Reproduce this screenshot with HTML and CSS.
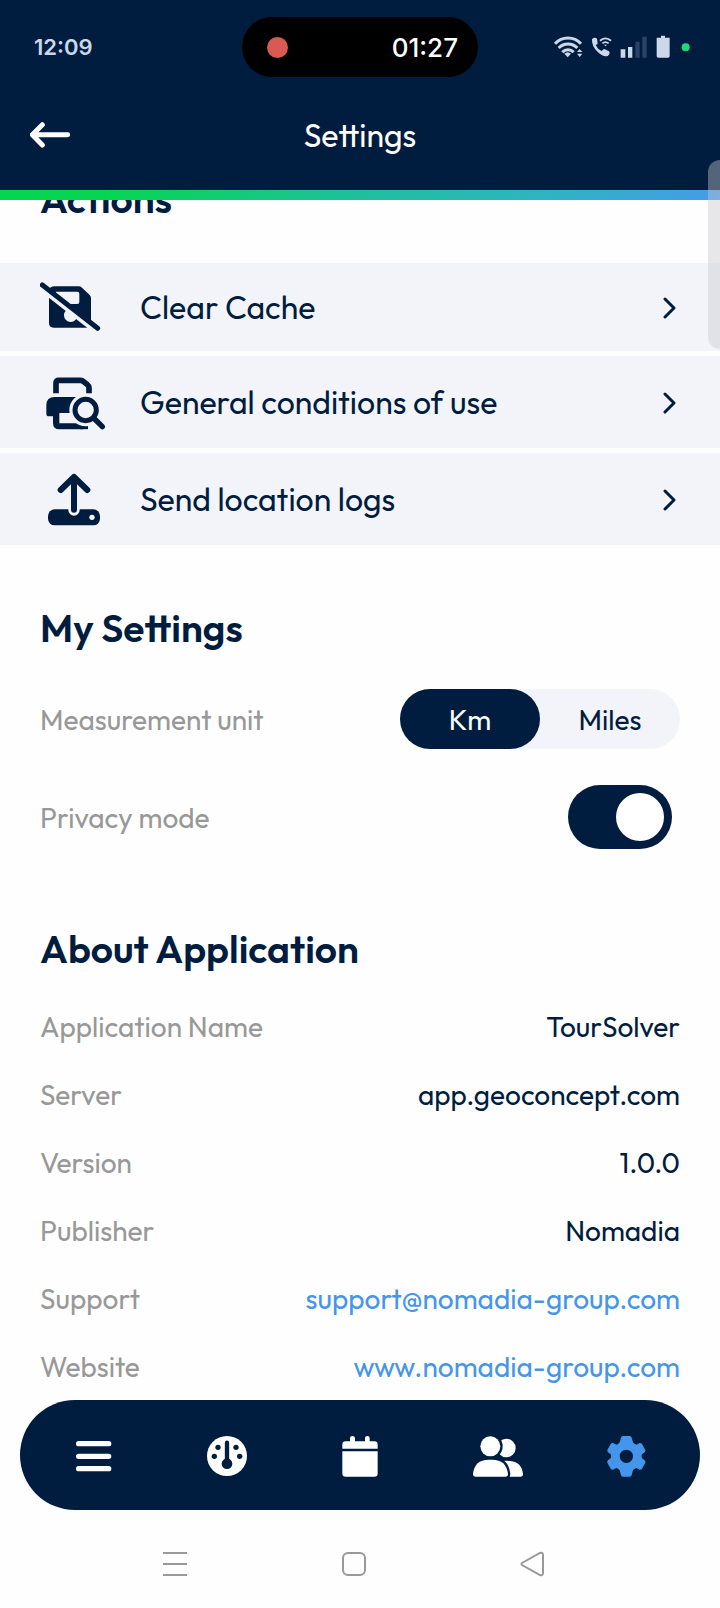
FILE: index.html
```html
<!DOCTYPE html>
<html lang="en">
<head>
<meta charset="utf-8">
<meta name="viewport" content="width=device-width, initial-scale=1">
<title>Settings</title>
<link rel="stylesheet" href="styles.css">
</head>
<body>
<div class="screen">
  <header class="top">
    <div class="status">
      <time class="clock">12:09</time>
      <div class="island"><span class="rec"></span><span>01:27</span></div>
      <svg class="status-icons" width="138" height="24" viewBox="580 104 414 72" aria-hidden="true">
        <g fill="none" stroke="#ccd8ea" stroke-width="9">
          <path d="M586 130C607 107 643 107 664 130"/>
          <path d="M597 143C612 127 638 127 653 143"/>
          <path d="M608 156C617 146 633 146 642 156"/>
          <path d="M721 121C731 112 744 112 754 121" stroke-width="6"/>
          <path d="M728 129C734 124 741 124 747 129" stroke-width="5"/>
        </g>
        <g fill="#ccd8ea">
          <path d="M614 160Q624 151 634 160L624 171Z"/>
          <path d="M652 155L660 146L668 155ZM652 160H668L660 170Z"/>
          <path d="M733 133H742L738 138Z"/>
          <path d="M697 116Q706 109 712 115L714 129Q714 132 708 134Q713 146 726 152Q731 146 734 146L748 153Q753 160 745 166Q733 172 715 156Q695 137 697 116Z"/>
          <path d="M783 147h14v25h-14zM805 140h13v32h-13z"/>
          <path d="M904 106h12v6h14v55q0 5-5 5h-29q-5 0-5-5v-55h13z"/>
        </g>
        <path d="M827 124h13v48h-13zM848 109h13v63h-13z" fill="#2a4263"/>
        <circle cx="978" cy="141" r="12" fill="#1fd877"/>
      </svg>
    </div>
    <div class="titlebar">
      <button class="back" aria-label="Back">
        <svg width="40" height="26" viewBox="90 370 120 78" aria-hidden="true"><path d="M127 378L97 408L127 439M98 408H203" fill="none" stroke="#fff" stroke-width="15" stroke-linecap="round" stroke-linejoin="round"/></svg>
      </button>
      <h1>Settings</h1>
    </div>
  </header>

  <main>
    <section class="actions">
      <h2>Actions</h2>
      <button class="action action-first">
        <svg width="66" height="64" viewBox="120 286 198 192" aria-hidden="true">
          <path fill="#001d40" fill-rule="evenodd" d="M165 320H236Q242 320 246 324L269 346Q273 350 273 356V430Q273 444 259 444H161Q147 444 147 430V335Q147 320 165 320ZM167 336V365L179 373H232Q238 373 238 367V342Q238 336 232 336Z"/>
          <circle cx="212" cy="407" r="20" fill="#f3f4fa"/>
          <path d="M120 326L294 462" stroke="#f3f4fa" stroke-width="12"/>
          <path d="M127 316L293 446" stroke="#001d40" stroke-width="15" stroke-linecap="round"/>
        </svg>
        <span>Clear Cache</span>
        <svg class="chev" width="14" height="24" viewBox="0 0 14 24" aria-hidden="true"><path d="M2 4L11 13L2 22"/></svg>
      </button>
      <button class="action">
        <svg width="66" height="64" viewBox="120 569 198 192" aria-hidden="true">
          <path d="M168 639V609Q168 600 177 600H242Q247 600 251 604L262 613Q267 617 267 622V639" fill="none" stroke="#001d40" stroke-width="17"/>
          <path fill="#001d40" fill-rule="evenodd" d="M164 650H250V747H178Q159 747 159 728V708H147Q139 708 139 700V675Q139 650 164 650ZM178 698V729H236V698Z"/>
          <path d="M240 738H264" stroke="#001d40" stroke-width="17"/>
          <circle cx="257" cy="689" r="49" fill="#f3f4fa"/>
          <circle cx="257" cy="689" r="32" fill="none" stroke="#001d40" stroke-width="15"/>
          <path d="M281 713L307 739" stroke="#001d40" stroke-width="16" stroke-linecap="round"/>
        </svg>
        <span>General conditions of use</span>
        <svg class="chev" width="14" height="24" viewBox="0 0 14 24" aria-hidden="true"><path d="M2 4L11 13L2 22"/></svg>
      </button>
      <button class="action">
        <svg width="66" height="64" viewBox="120 862 198 192" aria-hidden="true">
          <rect x="144" y="989" width="156" height="48" rx="20" fill="#001d40"/>
          <path d="M222 895V991" stroke="#f3f4fa" stroke-width="34" stroke-linecap="round"/>
          <path d="M182 931L222 892L262 931M222 896V990" fill="none" stroke="#001d40" stroke-width="18" stroke-linecap="round" stroke-linejoin="round"/>
          <circle cx="276" cy="1013" r="8" fill="#f3f4fa"/>
        </svg>
        <span>Send location logs</span>
        <svg class="chev" width="14" height="24" viewBox="0 0 14 24" aria-hidden="true"><path d="M2 4L11 13L2 22"/></svg>
      </button>
    </section>

    <section class="group">
      <h2>My Settings</h2>
      <div class="settings">
        <fieldset class="setting">
          <legend>Measurement unit</legend>
          <div class="segment">
            <label><input type="radio" name="unit" checked><span>Km</span></label>
            <label><input type="radio" name="unit"><span>Miles</span></label>
          </div>
        </fieldset>
        <div class="setting">
          <label for="privacy">Privacy mode</label>
          <input class="switch" type="checkbox" role="switch" id="privacy" checked>
        </div>
      </div>
    </section>

    <section class="group">
      <h2>About Application</h2>
      <dl>
        <div><dt>Application Name</dt><dd>TourSolver</dd></div>
        <div><dt>Server</dt><dd>app.geoconcept.com</dd></div>
        <div><dt>Version</dt><dd>1.0.0</dd></div>
        <div><dt>Publisher</dt><dd>Nomadia</dd></div>
        <div><dt>Support</dt><dd><a href="mailto:support@nomadia-group.com">support@nomadia-group.com</a></dd></div>
        <div><dt>Website</dt><dd><a href="http://www.nomadia-group.com">www.nomadia-group.com</a></dd></div>
      </dl>
    </section>
  </main>

  <nav class="tabs">
    <button aria-label="Menu"><svg width="60" height="54" viewBox="191 144 180 162"><path d="M235 191H325M235 229H325M235 266H325" stroke="#fff" stroke-width="16" stroke-linecap="round"/></svg></button>
    <button aria-label="Dashboard"><svg width="60" height="54" viewBox="590 144 180 162"><circle cx="680" cy="228" r="60" fill="#fff"/><g fill="#001d40"><circle cx="653" cy="202" r="8"/><circle cx="707" cy="202" r="8"/><circle cx="642" cy="229" r="8"/><circle cx="718" cy="229" r="8"/><circle cx="680" cy="251" r="16"/></g><path d="M680 188V245" stroke="#001d40" stroke-width="13" stroke-linecap="round"/></svg></button>
    <button aria-label="Calendar"><svg width="60" height="54" viewBox="990 144 180 162"><path fill="#fff" d="M1027 206V194Q1027 184 1037 184H1050V174Q1050 168 1057 168T1065 174V184H1095V174Q1095 168 1102 168T1109 174V184H1123Q1133 184 1133 194V206ZM1027 214H1133V281Q1133 290 1123 290H1037Q1027 290 1027 281Z"/></svg></button>
    <button aria-label="Contacts"><svg width="60" height="54" viewBox="310 144 180 162"><g fill="#fff"><circle cx="440" cy="204" r="28"/><path d="M400 290V248Q430 240 452 243Q486 246 490 282Q490 290 482 290Z"/></g><g fill="#fff" stroke="#001d40" stroke-width="14" paint-order="stroke"><circle cx="392" cy="199" r="30"/><path d="M348 290Q340 290 340 282Q345 239 386 239H398Q440 239 445 282Q445 290 437 290Z"/></g></svg></button>
    <button aria-label="Settings"><svg width="60" height="54" viewBox="709 144 180 162"><path fill="#4596ea" fill-rule="evenodd" d="M790 168H810Q815 168 816 173L820 187Q823 192 830 194L840 189Q844 188 847 192L857 210Q858 214 855 217L847 223Q844 229 847 235L855 241Q858 244 857 248L847 266Q844 270 840 269L830 264Q823 266 820 271L816 285Q815 290 810 290H790Q785 290 784 285L780 271Q777 266 770 264L760 269Q756 270 753 266L743 248Q742 244 745 241L753 235Q756 229 753 223L745 217Q742 214 743 210L753 192Q756 188 760 189L770 194Q777 192 780 187L784 173Q785 168 790 168ZM800 209A20 20 0 1 0 800 249A20 20 0 1 0 800 209Z"/></svg></button>
  </nav>

  <div class="system">
    <button aria-label="Recent apps"><svg width="26" height="26" viewBox="0 0 26 26"><path d="M1 2H25M1 13H25M1 24H25"/></svg></button>
    <button aria-label="Home"><svg width="26" height="26" viewBox="0 0 26 26"><rect x="2" y="2" width="22" height="22" rx="5"/></svg></button>
    <button aria-label="Go back"><svg width="26" height="26" viewBox="0 0 26 26"><path d="M2 12L20 2Q23 1 23 4V22Q23 25 20 24L2 14Q1 13 2 12Z"/></svg></button>
  </div>
  <div class="edge-handle"></div>
</div>
</body>
</html>
```
FILE: styles.css
```css
* { box-sizing: border-box; }
body {
  margin: 0;
  background: #fefefe;
  color: #001d40;
  font-family: Outfit, Lato, "Open Sans", sans-serif;
  font-size: 28px;
}
h1, h2, dl, dd { margin: 0; }
button {
  padding: 0;
  border: 0;
  background: none;
  color: inherit;
  font: inherit;
}
svg { display: block; }

.screen {
  position: relative;
  display: flex;
  flex-direction: column;
  min-height: 100vh;
}

.top {
  position: relative;
  z-index: 1;
  background: #001d40;
  color: #fff;
}
.top::after {
  content: "";
  display: block;
  height: 10px;
  background: linear-gradient(90deg, #07d552 15%, #20bf9c 50%, #2eb4c0 75%, #479bea);
}
.status {
  display: grid;
  grid-template-columns: 1fr 236px 1fr;
  align-items: center;
  padding: 17px 29px 0;
}
.clock {
  padding-left: 5px;
  color: #ccd8ea;
  font-family: Inter, sans-serif;
  font-size: 22px;
  font-weight: 600;
}
.island {
  display: flex;
  align-items: center;
  justify-content: space-between;
  height: 60px;
  padding: 0 20px 0 25px;
  border-radius: 30px;
  background: #000;
  font-family: Inter, sans-serif;
  font-size: 26px;
  font-weight: 500;
}
.rec {
  width: 21px;
  height: 21px;
  border-radius: 50%;
  background: #d95a50;
}
.status-icons { justify-self: end; }
.titlebar {
  display: grid;
  grid-template-columns: 1fr auto 1fr;
  align-items: center;
  height: 113px;
  padding: 3px 30px 0;
}
h1 {
  font-size: 32px;
  font-weight: 400;
  line-height: 40px;
}

main {
  flex: 1;
  margin-top: -25px;
}
h2 {
  font-size: 39px;
  font-weight: 600;
  line-height: 48px;
}
.actions {
  display: flex;
  flex-direction: column;
  gap: 5px;
}
.actions h2 { padding: 0 40px 35px; }
.action {
  display: flex;
  align-items: center;
  gap: 34px;
  padding: 14px 43px 14px 40px;
  background: #f3f4fa;
  font-size: 32px;
  text-align: left;
}
.action-first { padding-block: 12px; }
.action span { flex: 1; }
.chev {
  fill: none;
  stroke: #001d40;
  stroke-width: 3;
  stroke-linecap: round;
  stroke-linejoin: round;
}

.group { padding: 59px 40px 0; }
.settings { padding-top: 18px; }
.setting {
  display: flex;
  align-items: center;
  justify-content: space-between;
  height: 98px;
  margin: 0;
  padding: 0;
  border: 0;
}
.setting legend {
  float: left;
  padding: 0;
}
.setting legend, .setting > label, dt { color: #989898; }
.segment {
  display: grid;
  grid-template-columns: 1fr 1fr;
  width: 280px;
  border-radius: 30px;
  background: #f3f4fa;
}
.segment label { position: relative; }
.segment input {
  position: absolute;
  inset: 0;
  margin: 0;
  opacity: 0;
}
.segment span {
  display: block;
  padding-top: 2px;
  border-radius: 30px;
  line-height: 58px;
  text-align: center;
}
.segment input:checked + span {
  background: #001d40;
  color: #fff;
}
.switch {
  display: flex;
  justify-content: flex-end;
  width: 104px;
  height: 64px;
  margin: 0 8px 0 0;
  padding: 8px;
  border-radius: 32px;
  background: #001d40;
  appearance: none;
}
.switch::before {
  content: "";
  width: 48px;
  height: 48px;
  border-radius: 50%;
  background: #fff;
}
.switch:not(:checked) { justify-content: flex-start; }

dl {
  display: grid;
  gap: 32px;
  padding-top: 36px;
  line-height: 36px;
}
dl div {
  display: flex;
  justify-content: space-between;
}
a {
  color: #4596ea;
  text-decoration: none;
}

.tabs {
  display: grid;
  grid-template-columns: repeat(5, 1fr);
  justify-items: center;
  margin: 0 20px;
  padding: 28px 7px;
  border-radius: 55px;
  background: #001d40;
}
.system {
  display: grid;
  grid-template-columns: repeat(3, 1fr);
  justify-items: center;
  padding: 41px 98px 31px 86px;
}
.system svg {
  fill: none;
  stroke: #999;
  stroke-width: 2;
}

.edge-handle {
  position: absolute;
  z-index: 2;
  top: 160px;
  right: 0;
  width: 12px;
  height: 189px;
  border-radius: 12px 0 0 12px;
  background: rgba(200, 200, 205, 0.42);
}
```
